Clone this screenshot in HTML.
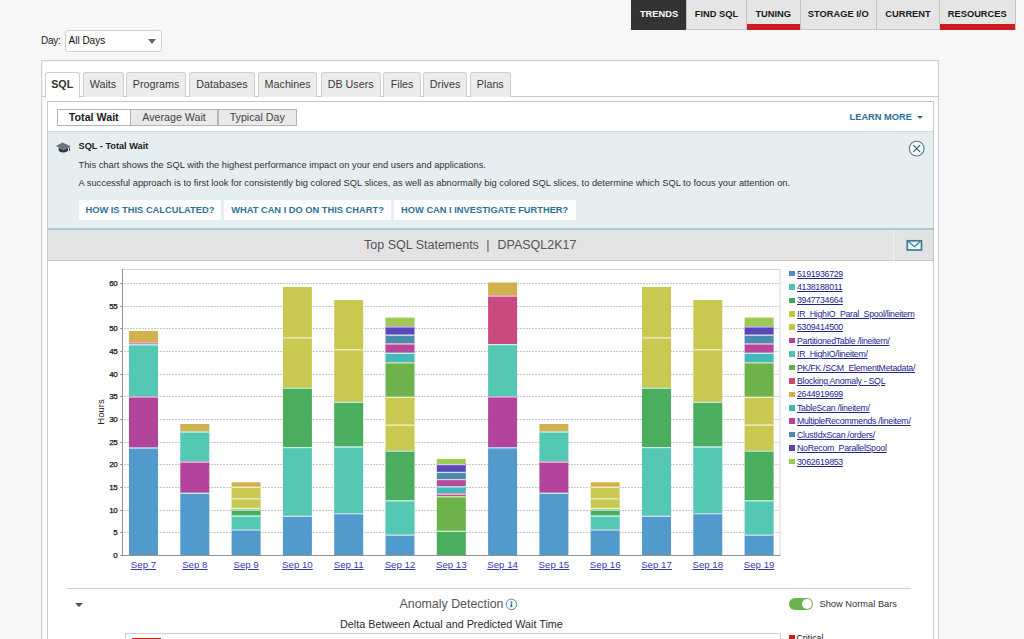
<!DOCTYPE html>
<html><head><meta charset="utf-8"><style>
*{box-sizing:border-box;margin:0;padding:0}
html,body{width:1024px;height:639px;overflow:hidden;background:#f7f7f9;font-family:"Liberation Sans",sans-serif;color:#333;position:relative}
.a{position:absolute;white-space:nowrap}
.nav{position:absolute;top:0;height:29.5px;background:#e5e5e5;border-left:1px solid #c4c4c4;border-bottom:1px solid #c8c8c8;font-size:9.3px;font-weight:bold;color:#1a1a1a;text-align:center;line-height:29px;letter-spacing:0px}
.nav.red::after{content:"";position:absolute;left:0;right:0;bottom:-1px;height:6px;background:#cc1d22}
.tab{position:absolute;top:72px;height:25px;background:#ececec;border:1px solid #cfcfcf;border-bottom:none;border-radius:3px 3px 0 0;font-size:10.75px;color:#3a3a3a;text-align:center;line-height:23px}
.st{position:absolute;top:109px;height:17px;background:#e9e9e9;border:1px solid #b5b5b5;font-size:10.7px;color:#444;text-align:center;line-height:15px}
.ib{position:absolute;top:200px;height:20px;background:#fff;font-size:9.3px;font-weight:bold;color:#2b7398;line-height:20px;text-align:center}
.yt{font-family:"Liberation Sans",sans-serif;font-size:8px;fill:#111;letter-spacing:-0.3px;stroke:#111;stroke-width:0.25px}
.xl{position:absolute;top:559px;width:60px;text-align:center;font-size:9.7px;color:#3a3ab0;text-decoration:underline;line-height:12px}
.lg{position:absolute;left:788.5px;height:12px;font-size:8.8px;letter-spacing:-0.3px;line-height:12px;color:#25258f;white-space:nowrap}
.lg i{position:absolute;left:0.3px;top:3.2px;width:5.8px;height:5.6px}
.lg span{position:absolute;left:8.5px;top:0;text-decoration:underline}
</style></head><body>

<!-- top nav -->
<div class="nav" style="left:631px;width:55px;background:#333;color:#fff;font-weight:bold;border-color:#333;font-size:9.3px">TRENDS</div>
<div class="nav" style="left:686px;width:60px">FIND SQL</div>
<div class="nav red" style="left:746px;width:53.5px">TUNING</div>
<div class="nav" style="left:799.5px;width:76.5px">STORAGE I/O</div>
<div class="nav" style="left:876px;width:63px">CURRENT</div>
<div class="nav red" style="left:939px;width:76.5px;border-right:1px solid #c4c4c4">RESOURCES</div>

<!-- day select -->
<div class="a" style="left:41px;top:35px;font-size:10px;letter-spacing:-0.3px;color:#222;line-height:12px">Day:</div>
<div class="a" style="left:65px;top:30px;width:96.5px;height:21.5px;background:#fff;border:1px solid #d0d0d0;border-radius:3px"></div>
<div class="a" style="left:68.5px;top:35px;font-size:10px;color:#111;line-height:12px">All Days</div>
<div class="a" style="left:147.5px;top:39px;width:0;height:0;border-left:4.5px solid transparent;border-right:4.5px solid transparent;border-top:5px solid #666"></div>

<!-- outer container -->
<div class="a" style="left:41px;top:60px;width:898px;height:600px;background:#fff;border:1px solid #d2d2d2;box-shadow:inset 1px 1px 0 #f2f2f2,inset -1px 0 0 #f2f2f2"></div>
<div class="a" style="left:42px;top:96px;width:897px;height:1px;background:#c8c8c8"></div>

<!-- tabs -->
<div class="tab" style="left:44.5px;width:35.5px;background:#fff;font-weight:bold;color:#333;height:25.5px;z-index:2">SQL</div>
<div class="tab" style="left:82.5px;width:41px">Waits</div>
<div class="tab" style="left:126.3px;width:59.7px">Programs</div>
<div class="tab" style="left:189.4px;width:65.3px">Databases</div>
<div class="tab" style="left:257.7px;width:59.8px">Machines</div>
<div class="tab" style="left:320.7px;width:60px">DB Users</div>
<div class="tab" style="left:383.4px;width:37.3px">Files</div>
<div class="tab" style="left:423.2px;width:43.7px">Drives</div>
<div class="tab" style="left:470px;width:40.6px">Plans</div>

<!-- inner panel -->
<div class="a" style="left:47px;top:101px;width:887px;height:560px;background:#fff;border:1px solid #c9c9c9;border-top:1.5px solid #c4c4c4"></div>

<!-- sub tabs -->
<div class="st" style="left:57px;width:73.5px;background:#fff;font-weight:bold;color:#222">Total Wait</div>
<div class="st" style="left:130px;width:88px">Average Wait</div>
<div class="st" style="left:217.5px;width:79.5px">Typical Day</div>

<div class="a" style="left:849.5px;top:111px;font-size:9.3px;font-weight:bold;color:#2b7096;line-height:12px">LEARN MORE</div>
<div class="a" style="left:916.5px;top:115.5px;width:0;height:0;border-left:3px solid transparent;border-right:3px solid transparent;border-top:3.5px solid #2b7096"></div>

<!-- info box -->
<div class="a" style="left:48px;top:131px;width:885px;height:98.5px;background:#e5eef1;border-top:1px solid #c8dfe2;border-bottom:2px solid #a9cccc"></div>
<svg class="a" style="left:54px;top:140px" width="18" height="14" viewBox="0 0 18 14">
 <path d="M4.6 7.5 L4.8 11 Q9.5 14 14 11 L14 7.5 L9.3 9.8 Z" fill="#2e3a40"/>
 <path d="M1.8 6 L8.5 2.6 L16.8 6.3 L9.2 9.5 Z" fill="#66767c"/>
 <path d="M15 7 L15.8 11" stroke="#3a464c" stroke-width="1"/>
</svg>
<div class="a" style="left:78.5px;top:140px;font-size:9.2px;font-weight:bold;color:#222;line-height:12px">SQL - Total Wait</div>
<div class="a" style="left:78.5px;top:158.5px;font-size:9.3px;color:#333;line-height:12px">This chart shows the SQL with the highest performance impact on your end users and applications.</div>
<div class="a" style="left:78.5px;top:177px;font-size:9.3px;color:#333;line-height:12px">A successful approach is to first look for consistently big colored SQL slices, as well as abnormally big colored SQL slices, to determine which SQL to focus your attention on.</div>
<div class="ib" style="left:78.7px;width:142.5px">HOW IS THIS CALCULATED?</div>
<div class="ib" style="left:224px;width:167px">WHAT CAN I DO ON THIS CHART?</div>
<div class="ib" style="left:393.7px;width:182px">HOW CAN I INVESTIGATE FURTHER?</div>
<svg class="a" style="left:908px;top:140px" width="18" height="18" viewBox="0 0 18 18">
 <circle cx="8.7" cy="8.6" r="7.4" fill="#f3f8fa" stroke="#6f7578" stroke-width="1.1"/>
 <path d="M5.3 5.2 L12.1 11.9 M12.1 5.2 L5.3 11.9" stroke="#24606f" stroke-width="1.1"/>
</svg>

<!-- title bar -->
<div class="a" style="left:48px;top:229.5px;width:885px;height:31px;background:#e3e3e3;border-bottom:1px solid #c8c8c8"></div>
<div class="a" style="left:893px;top:229.5px;width:1px;height:31px;background:#f2f2f2"></div>
<div class="a" style="left:364px;top:237.5px;font-size:12.5px;color:#555;line-height:14px">Top SQL Statements</div>
<div class="a" style="left:486.2px;top:237.5px;font-size:12.5px;color:#555;line-height:14px">|</div>
<div class="a" style="left:497.5px;top:237.5px;font-size:12.5px;color:#555;line-height:14px">DPASQL2K17</div>
<svg class="a" style="left:906px;top:239px" width="17" height="13" viewBox="0 0 17 13">
 <rect x="1.3" y="1.8" width="14.2" height="9.2" fill="#eafaff" stroke="#3c7b92" stroke-width="1.7"/>
 <path d="M2.5 2.5 L8.4 7.8 L14.3 2.5" fill="none" stroke="#3c7b92" stroke-width="1.2"/>
</svg>

<!-- chart -->
<svg class="a" style="left:0;top:0" width="1024" height="639">
 <rect x="122.5" y="269.5" width="657.5" height="286" fill="#fff" stroke="#d6d6d6" stroke-width="1"/>
<line x1="120" y1="555.5" x2="122.5" y2="555.5" stroke="#9a9a9a" stroke-width="1"/>
<text x="117.5" y="558.1" text-anchor="end" class="yt">0</text>
<line x1="124" y1="532.5" x2="779" y2="532.5" stroke="#c8c8c8" stroke-width="1" stroke-dasharray="2,1"/>
<line x1="120" y1="532.5" x2="122.5" y2="532.5" stroke="#9a9a9a" stroke-width="1"/>
<text x="117.5" y="535.4" text-anchor="end" class="yt">5</text>
<line x1="124" y1="510.5" x2="779" y2="510.5" stroke="#c8c8c8" stroke-width="1" stroke-dasharray="2,1"/>
<line x1="120" y1="510.5" x2="122.5" y2="510.5" stroke="#9a9a9a" stroke-width="1"/>
<text x="117.5" y="512.8" text-anchor="end" class="yt">10</text>
<line x1="124" y1="487.5" x2="779" y2="487.5" stroke="#c8c8c8" stroke-width="1" stroke-dasharray="2,1"/>
<line x1="120" y1="487.5" x2="122.5" y2="487.5" stroke="#9a9a9a" stroke-width="1"/>
<text x="117.5" y="490.1" text-anchor="end" class="yt">15</text>
<line x1="124" y1="464.5" x2="779" y2="464.5" stroke="#c8c8c8" stroke-width="1" stroke-dasharray="2,1"/>
<line x1="120" y1="464.5" x2="122.5" y2="464.5" stroke="#9a9a9a" stroke-width="1"/>
<text x="117.5" y="467.4" text-anchor="end" class="yt">20</text>
<line x1="124" y1="442.5" x2="779" y2="442.5" stroke="#c8c8c8" stroke-width="1" stroke-dasharray="2,1"/>
<line x1="120" y1="442.5" x2="122.5" y2="442.5" stroke="#9a9a9a" stroke-width="1"/>
<text x="117.5" y="444.8" text-anchor="end" class="yt">25</text>
<line x1="124" y1="419.5" x2="779" y2="419.5" stroke="#c8c8c8" stroke-width="1" stroke-dasharray="2,1"/>
<line x1="120" y1="419.5" x2="122.5" y2="419.5" stroke="#9a9a9a" stroke-width="1"/>
<text x="117.5" y="422.1" text-anchor="end" class="yt">30</text>
<line x1="124" y1="396.5" x2="779" y2="396.5" stroke="#c8c8c8" stroke-width="1" stroke-dasharray="2,1"/>
<line x1="120" y1="396.5" x2="122.5" y2="396.5" stroke="#9a9a9a" stroke-width="1"/>
<text x="117.5" y="399.4" text-anchor="end" class="yt">35</text>
<line x1="124" y1="374.5" x2="779" y2="374.5" stroke="#c8c8c8" stroke-width="1" stroke-dasharray="2,1"/>
<line x1="120" y1="374.5" x2="122.5" y2="374.5" stroke="#9a9a9a" stroke-width="1"/>
<text x="117.5" y="376.8" text-anchor="end" class="yt">40</text>
<line x1="124" y1="351.5" x2="779" y2="351.5" stroke="#c8c8c8" stroke-width="1" stroke-dasharray="2,1"/>
<line x1="120" y1="351.5" x2="122.5" y2="351.5" stroke="#9a9a9a" stroke-width="1"/>
<text x="117.5" y="354.1" text-anchor="end" class="yt">45</text>
<line x1="124" y1="328.5" x2="779" y2="328.5" stroke="#c8c8c8" stroke-width="1" stroke-dasharray="2,1"/>
<line x1="120" y1="328.5" x2="122.5" y2="328.5" stroke="#9a9a9a" stroke-width="1"/>
<text x="117.5" y="331.4" text-anchor="end" class="yt">50</text>
<line x1="124" y1="306.5" x2="779" y2="306.5" stroke="#c8c8c8" stroke-width="1" stroke-dasharray="2,1"/>
<line x1="120" y1="306.5" x2="122.5" y2="306.5" stroke="#9a9a9a" stroke-width="1"/>
<text x="117.5" y="308.8" text-anchor="end" class="yt">55</text>
<line x1="124" y1="283.5" x2="779" y2="283.5" stroke="#c8c8c8" stroke-width="1" stroke-dasharray="2,1"/>
<line x1="120" y1="283.5" x2="122.5" y2="283.5" stroke="#9a9a9a" stroke-width="1"/>
<text x="117.5" y="286.1" text-anchor="end" class="yt">60</text>
<rect x="129.0" y="331.0" width="29" height="11.3" fill="#d2b04e"/>
<rect x="129.0" y="342.3" width="29" height="2.0" fill="#c94b80"/>
<rect x="129.0" y="342.3" width="29" height="1.2" fill="#efccdb"/>
<rect x="129.0" y="344.3" width="29" height="52.1" fill="#54c8b2"/>
<rect x="129.0" y="344.3" width="29" height="1.2" fill="#cfefe9"/>
<rect x="129.0" y="396.4" width="29" height="51.1" fill="#b3449c"/>
<rect x="129.0" y="396.4" width="29" height="1.2" fill="#e9cae3"/>
<rect x="129.0" y="447.5" width="29" height="108.0" fill="#5299cc"/>
<rect x="129.0" y="447.5" width="29" height="1.2" fill="#cee2f0"/>
<rect x="180.3" y="424.0" width="29" height="7.5" fill="#d2b04e"/>
<rect x="180.3" y="431.5" width="29" height="30.0" fill="#54c8b2"/>
<rect x="180.3" y="431.5" width="29" height="1.2" fill="#cfefe9"/>
<rect x="180.3" y="461.5" width="29" height="31.3" fill="#b3449c"/>
<rect x="180.3" y="461.5" width="29" height="1.2" fill="#e9cae3"/>
<rect x="180.3" y="492.8" width="29" height="62.7" fill="#5299cc"/>
<rect x="180.3" y="492.8" width="29" height="1.2" fill="#cee2f0"/>
<rect x="231.6" y="482.3" width="29" height="4.5" fill="#d2b04e"/>
<rect x="231.6" y="486.8" width="29" height="11.4" fill="#c9c952"/>
<rect x="231.6" y="486.8" width="29" height="1.2" fill="#efefce"/>
<rect x="231.6" y="498.2" width="29" height="9.7" fill="#c9c952"/>
<rect x="231.6" y="498.2" width="29" height="1.2" fill="#efefce"/>
<rect x="231.6" y="507.9" width="29" height="1.7" fill="#9dca52"/>
<rect x="231.6" y="507.9" width="29" height="1.2" fill="#e3f0ce"/>
<rect x="231.6" y="509.6" width="29" height="6.0" fill="#4aae5e"/>
<rect x="231.6" y="509.6" width="29" height="1.2" fill="#cce8d1"/>
<rect x="231.6" y="515.6" width="29" height="13.8" fill="#54c8b2"/>
<rect x="231.6" y="515.6" width="29" height="1.2" fill="#cfefe9"/>
<rect x="231.6" y="529.4" width="29" height="26.1" fill="#5299cc"/>
<rect x="231.6" y="529.4" width="29" height="1.2" fill="#cee2f0"/>
<rect x="282.9" y="287.0" width="29" height="50.3" fill="#c9c952"/>
<rect x="282.9" y="337.3" width="29" height="50.4" fill="#c9c952"/>
<rect x="282.9" y="337.3" width="29" height="1.2" fill="#efefce"/>
<rect x="282.9" y="387.7" width="29" height="59.3" fill="#4aae5e"/>
<rect x="282.9" y="387.7" width="29" height="1.2" fill="#cce8d1"/>
<rect x="282.9" y="447.0" width="29" height="68.8" fill="#54c8b2"/>
<rect x="282.9" y="447.0" width="29" height="1.2" fill="#cfefe9"/>
<rect x="282.9" y="515.8" width="29" height="39.7" fill="#5299cc"/>
<rect x="282.9" y="515.8" width="29" height="1.2" fill="#cee2f0"/>
<rect x="334.2" y="300.0" width="29" height="49.2" fill="#c9c952"/>
<rect x="334.2" y="349.2" width="29" height="52.6" fill="#c9c952"/>
<rect x="334.2" y="349.2" width="29" height="1.2" fill="#efefce"/>
<rect x="334.2" y="401.8" width="29" height="44.7" fill="#4aae5e"/>
<rect x="334.2" y="401.8" width="29" height="1.2" fill="#cce8d1"/>
<rect x="334.2" y="446.5" width="29" height="66.7" fill="#54c8b2"/>
<rect x="334.2" y="446.5" width="29" height="1.2" fill="#cfefe9"/>
<rect x="334.2" y="513.2" width="29" height="42.3" fill="#5299cc"/>
<rect x="334.2" y="513.2" width="29" height="1.2" fill="#cee2f0"/>
<rect x="385.5" y="317.6" width="29" height="8.7" fill="#9dca52"/>
<rect x="385.5" y="326.3" width="29" height="8.4" fill="#5b47b8"/>
<rect x="385.5" y="326.3" width="29" height="1.2" fill="#d1cbeb"/>
<rect x="385.5" y="334.7" width="29" height="8.7" fill="#4a8bb0"/>
<rect x="385.5" y="334.7" width="29" height="1.2" fill="#ccdee8"/>
<rect x="385.5" y="343.4" width="29" height="9.4" fill="#b8489a"/>
<rect x="385.5" y="343.4" width="29" height="1.2" fill="#ebcbe2"/>
<rect x="385.5" y="352.8" width="29" height="9.4" fill="#45b9b9"/>
<rect x="385.5" y="352.8" width="29" height="1.2" fill="#caebeb"/>
<rect x="385.5" y="362.2" width="29" height="34.6" fill="#6db24a"/>
<rect x="385.5" y="362.2" width="29" height="1.2" fill="#d6e9cc"/>
<rect x="385.5" y="396.8" width="29" height="27.8" fill="#c9c952"/>
<rect x="385.5" y="396.8" width="29" height="1.2" fill="#efefce"/>
<rect x="385.5" y="424.6" width="29" height="26.0" fill="#c9c952"/>
<rect x="385.5" y="424.6" width="29" height="1.2" fill="#efefce"/>
<rect x="385.5" y="450.6" width="29" height="49.7" fill="#4aae5e"/>
<rect x="385.5" y="450.6" width="29" height="1.2" fill="#cce8d1"/>
<rect x="385.5" y="500.3" width="29" height="34.3" fill="#54c8b2"/>
<rect x="385.5" y="500.3" width="29" height="1.2" fill="#cfefe9"/>
<rect x="385.5" y="534.6" width="29" height="20.9" fill="#5299cc"/>
<rect x="385.5" y="534.6" width="29" height="1.2" fill="#cee2f0"/>
<rect x="436.8" y="459.0" width="29" height="5.0" fill="#9dca52"/>
<rect x="436.8" y="464.0" width="29" height="7.9" fill="#5b47b8"/>
<rect x="436.8" y="464.0" width="29" height="1.2" fill="#d1cbeb"/>
<rect x="436.8" y="471.9" width="29" height="7.1" fill="#4a8bb0"/>
<rect x="436.8" y="471.9" width="29" height="1.2" fill="#ccdee8"/>
<rect x="436.8" y="479.0" width="29" height="7.3" fill="#b8489a"/>
<rect x="436.8" y="479.0" width="29" height="1.2" fill="#ebcbe2"/>
<rect x="436.8" y="486.3" width="29" height="7.3" fill="#45b9b9"/>
<rect x="436.8" y="486.3" width="29" height="1.2" fill="#caebeb"/>
<rect x="436.8" y="493.6" width="29" height="2.6" fill="#c94b80"/>
<rect x="436.8" y="493.6" width="29" height="1.2" fill="#efccdb"/>
<rect x="436.8" y="496.2" width="29" height="34.6" fill="#6db24a"/>
<rect x="436.8" y="496.2" width="29" height="1.2" fill="#d6e9cc"/>
<rect x="436.8" y="530.8" width="29" height="24.7" fill="#4aae5e"/>
<rect x="436.8" y="530.8" width="29" height="1.2" fill="#cce8d1"/>
<rect x="488.1" y="282.5" width="29" height="13.0" fill="#d2b04e"/>
<rect x="488.1" y="295.5" width="29" height="48.5" fill="#c94b80"/>
<rect x="488.1" y="295.5" width="29" height="1.2" fill="#efccdb"/>
<rect x="488.1" y="344.0" width="29" height="52.3" fill="#54c8b2"/>
<rect x="488.1" y="344.0" width="29" height="1.2" fill="#cfefe9"/>
<rect x="488.1" y="396.3" width="29" height="51.0" fill="#b3449c"/>
<rect x="488.1" y="396.3" width="29" height="1.2" fill="#e9cae3"/>
<rect x="488.1" y="447.3" width="29" height="108.2" fill="#5299cc"/>
<rect x="488.1" y="447.3" width="29" height="1.2" fill="#cee2f0"/>
<rect x="539.4" y="424.0" width="29" height="7.5" fill="#d2b04e"/>
<rect x="539.4" y="431.5" width="29" height="30.0" fill="#54c8b2"/>
<rect x="539.4" y="431.5" width="29" height="1.2" fill="#cfefe9"/>
<rect x="539.4" y="461.5" width="29" height="31.3" fill="#b3449c"/>
<rect x="539.4" y="461.5" width="29" height="1.2" fill="#e9cae3"/>
<rect x="539.4" y="492.8" width="29" height="62.7" fill="#5299cc"/>
<rect x="539.4" y="492.8" width="29" height="1.2" fill="#cee2f0"/>
<rect x="590.7" y="482.3" width="29" height="4.5" fill="#d2b04e"/>
<rect x="590.7" y="486.8" width="29" height="11.4" fill="#c9c952"/>
<rect x="590.7" y="486.8" width="29" height="1.2" fill="#efefce"/>
<rect x="590.7" y="498.2" width="29" height="9.7" fill="#c9c952"/>
<rect x="590.7" y="498.2" width="29" height="1.2" fill="#efefce"/>
<rect x="590.7" y="507.9" width="29" height="1.7" fill="#9dca52"/>
<rect x="590.7" y="507.9" width="29" height="1.2" fill="#e3f0ce"/>
<rect x="590.7" y="509.6" width="29" height="6.0" fill="#4aae5e"/>
<rect x="590.7" y="509.6" width="29" height="1.2" fill="#cce8d1"/>
<rect x="590.7" y="515.6" width="29" height="13.8" fill="#54c8b2"/>
<rect x="590.7" y="515.6" width="29" height="1.2" fill="#cfefe9"/>
<rect x="590.7" y="529.4" width="29" height="26.1" fill="#5299cc"/>
<rect x="590.7" y="529.4" width="29" height="1.2" fill="#cee2f0"/>
<rect x="642.0" y="287.0" width="29" height="50.3" fill="#c9c952"/>
<rect x="642.0" y="337.3" width="29" height="50.4" fill="#c9c952"/>
<rect x="642.0" y="337.3" width="29" height="1.2" fill="#efefce"/>
<rect x="642.0" y="387.7" width="29" height="59.3" fill="#4aae5e"/>
<rect x="642.0" y="387.7" width="29" height="1.2" fill="#cce8d1"/>
<rect x="642.0" y="447.0" width="29" height="68.8" fill="#54c8b2"/>
<rect x="642.0" y="447.0" width="29" height="1.2" fill="#cfefe9"/>
<rect x="642.0" y="515.8" width="29" height="39.7" fill="#5299cc"/>
<rect x="642.0" y="515.8" width="29" height="1.2" fill="#cee2f0"/>
<rect x="693.3" y="300.0" width="29" height="49.2" fill="#c9c952"/>
<rect x="693.3" y="349.2" width="29" height="52.6" fill="#c9c952"/>
<rect x="693.3" y="349.2" width="29" height="1.2" fill="#efefce"/>
<rect x="693.3" y="401.8" width="29" height="44.7" fill="#4aae5e"/>
<rect x="693.3" y="401.8" width="29" height="1.2" fill="#cce8d1"/>
<rect x="693.3" y="446.5" width="29" height="66.7" fill="#54c8b2"/>
<rect x="693.3" y="446.5" width="29" height="1.2" fill="#cfefe9"/>
<rect x="693.3" y="513.2" width="29" height="42.3" fill="#5299cc"/>
<rect x="693.3" y="513.2" width="29" height="1.2" fill="#cee2f0"/>
<rect x="744.6" y="317.6" width="29" height="8.7" fill="#9dca52"/>
<rect x="744.6" y="326.3" width="29" height="8.4" fill="#5b47b8"/>
<rect x="744.6" y="326.3" width="29" height="1.2" fill="#d1cbeb"/>
<rect x="744.6" y="334.7" width="29" height="8.7" fill="#4a8bb0"/>
<rect x="744.6" y="334.7" width="29" height="1.2" fill="#ccdee8"/>
<rect x="744.6" y="343.4" width="29" height="9.4" fill="#b8489a"/>
<rect x="744.6" y="343.4" width="29" height="1.2" fill="#ebcbe2"/>
<rect x="744.6" y="352.8" width="29" height="9.4" fill="#45b9b9"/>
<rect x="744.6" y="352.8" width="29" height="1.2" fill="#caebeb"/>
<rect x="744.6" y="362.2" width="29" height="34.6" fill="#6db24a"/>
<rect x="744.6" y="362.2" width="29" height="1.2" fill="#d6e9cc"/>
<rect x="744.6" y="396.8" width="29" height="27.8" fill="#c9c952"/>
<rect x="744.6" y="396.8" width="29" height="1.2" fill="#efefce"/>
<rect x="744.6" y="424.6" width="29" height="26.0" fill="#c9c952"/>
<rect x="744.6" y="424.6" width="29" height="1.2" fill="#efefce"/>
<rect x="744.6" y="450.6" width="29" height="49.7" fill="#4aae5e"/>
<rect x="744.6" y="450.6" width="29" height="1.2" fill="#cce8d1"/>
<rect x="744.6" y="500.3" width="29" height="34.3" fill="#54c8b2"/>
<rect x="744.6" y="500.3" width="29" height="1.2" fill="#cfefe9"/>
<rect x="744.6" y="534.6" width="29" height="20.9" fill="#5299cc"/>
<rect x="744.6" y="534.6" width="29" height="1.2" fill="#cee2f0"/>

 <line x1="122.5" y1="269" x2="122.5" y2="556" stroke="#929292" stroke-width="1"/>
 <line x1="122" y1="555.5" x2="780.5" y2="555.5" stroke="#929292" stroke-width="1"/>
 <text transform="translate(104,412) rotate(-90)" text-anchor="middle" style="font-family:'Liberation Sans';font-size:9.5px;fill:#222">Hours</text>
</svg>
<div class="xl" style="left:113.5px">Sep 7</div>
<div class="xl" style="left:164.8px">Sep 8</div>
<div class="xl" style="left:216.1px">Sep 9</div>
<div class="xl" style="left:267.4px">Sep 10</div>
<div class="xl" style="left:318.7px">Sep 11</div>
<div class="xl" style="left:370.0px">Sep 12</div>
<div class="xl" style="left:421.3px">Sep 13</div>
<div class="xl" style="left:472.6px">Sep 14</div>
<div class="xl" style="left:523.9px">Sep 15</div>
<div class="xl" style="left:575.2px">Sep 16</div>
<div class="xl" style="left:626.5px">Sep 17</div>
<div class="xl" style="left:677.8px">Sep 18</div>
<div class="xl" style="left:729.1px">Sep 19</div>
<div class="lg" style="top:267.5px"><i style="background:#4f8fc0"></i><span>5191936729</span></div>
<div class="lg" style="top:280.9px"><i style="background:#4fc4b0"></i><span>4138188011</span></div>
<div class="lg" style="top:294.4px"><i style="background:#46a85a"></i><span>3947734664</span></div>
<div class="lg" style="top:307.8px"><i style="background:#c4c44c"></i><span>IR_HighIO_Paral_Spool/lineitem</span></div>
<div class="lg" style="top:321.2px"><i style="background:#c4c44c"></i><span>5309414500</span></div>
<div class="lg" style="top:334.6px"><i style="background:#b0449a"></i><span>PartitionedTable /lineitem/</span></div>
<div class="lg" style="top:348.1px"><i style="background:#4fc4b0"></i><span>IR_HighIO/lineitem/</span></div>
<div class="lg" style="top:361.5px"><i style="background:#6ab04a"></i><span>PK/FK /SCM_ElementMetadata/</span></div>
<div class="lg" style="top:374.9px"><i style="background:#c84b72"></i><span>Blocking Anomaly - SQL</span></div>
<div class="lg" style="top:388.4px"><i style="background:#d0ac4c"></i><span>2644919699</span></div>
<div class="lg" style="top:401.8px"><i style="background:#44b4b8"></i><span>TableScan /lineitem/</span></div>
<div class="lg" style="top:415.2px"><i style="background:#b4449a"></i><span>MultipleRecommends /lineitem/</span></div>
<div class="lg" style="top:428.7px"><i style="background:#4a88ac"></i><span>ClustIdxScan /orders/</span></div>
<div class="lg" style="top:442.1px"><i style="background:#5844b0"></i><span>NoRecom_ParallelSpool</span></div>
<div class="lg" style="top:455.5px"><i style="background:#9cc850"></i><span>3062619853</span></div>

<!-- anomaly section -->
<div class="a" style="left:67px;top:588px;width:844px;height:1px;background:#d2d2d2"></div>
<div class="a" style="left:75px;top:603px;width:0;height:0;border-left:4px solid transparent;border-right:4px solid transparent;border-top:4.5px solid #555"></div>
<div class="a" style="left:399.5px;top:596.5px;font-size:12.4px;color:#555;line-height:14px">Anomaly Detection</div>
<svg class="a" style="left:505px;top:598px" width="13" height="13" viewBox="0 0 13 13">
 <circle cx="6.4" cy="6.4" r="5.3" fill="#f2fbfd" stroke="#5590a8" stroke-width="1"/>
 <rect x="5.7" y="5.6" width="1.5" height="3.6" fill="#2f5f6c"/>
 <rect x="5.7" y="3.4" width="1.5" height="1.4" fill="#2f5f6c"/>
</svg>
<div class="a" style="left:340px;top:617.8px;font-size:10.8px;color:#2a2a2a;line-height:13px">Delta Between Actual and Predicted Wait Time</div>
<div class="a" style="left:125px;top:632.5px;width:655.5px;height:20px;border:1px solid #cfcfcf;background:#fff"></div>
<div class="a" style="left:131.8px;top:637.5px;width:29px;height:5px;background:#cc1d22"></div>
<div class="a" style="left:789px;top:598px;width:23.5px;height:12px;border-radius:6px;background:#6cb24c"></div>
<div class="a" style="left:801.5px;top:599px;width:10px;height:10px;border-radius:5px;background:#fff"></div>
<div class="a" style="left:819.5px;top:598px;font-size:9.3px;color:#333;line-height:12px">Show Normal Bars</div>
<div class="a" style="left:789px;top:635px;width:5.5px;height:6px;background:#cc1d22"></div>
<div class="a" style="left:796.5px;top:632px;font-size:8.8px;color:#111;line-height:12px">Critical</div>

</body></html>
